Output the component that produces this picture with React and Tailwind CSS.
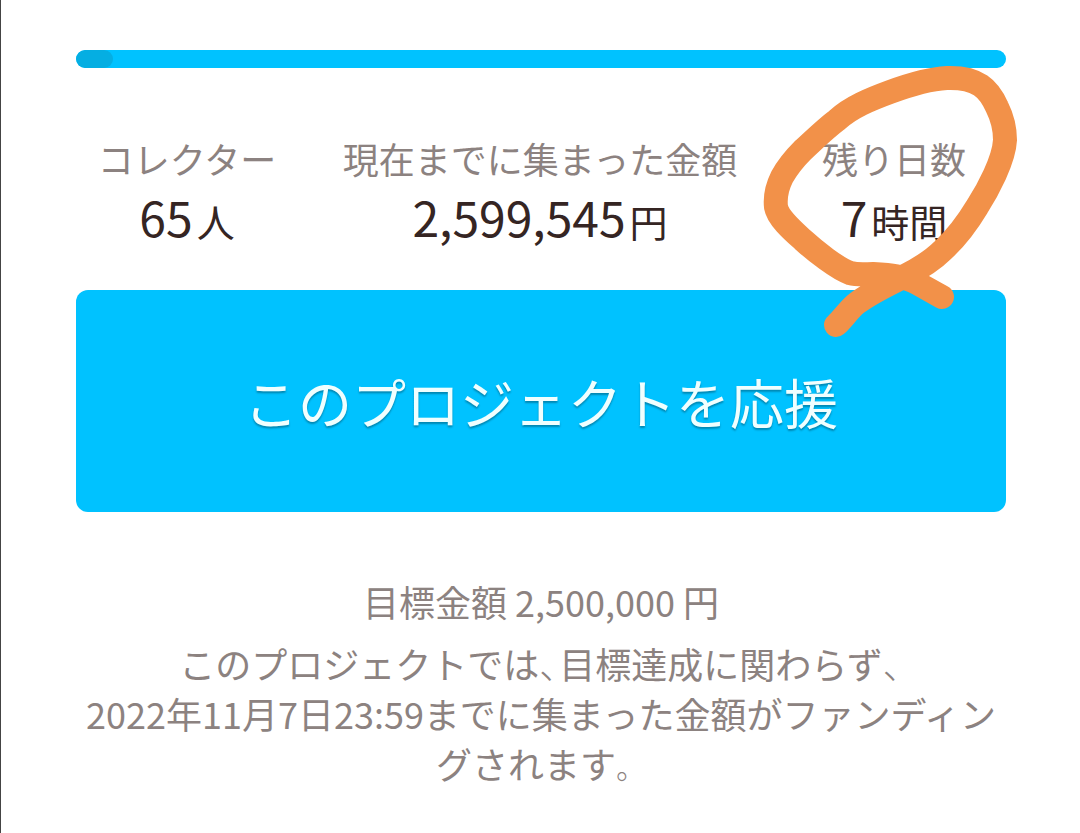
const stats = [
  { label: "コレクター", value: "65", unit: "人", width: "w-[222px]" },
  { label: "現在までに集まった金額", value: "2,599,545", unit: "円", width: "flex-1" },
  { label: "残り日数", value: "7", unit: "時間", width: "w-[224px]" },
];

function Stat({ label, value, unit, width }) {
  return (
    <div className={`${width} whitespace-nowrap text-center`}>
      <dt className="text-[36px] leading-[52px] text-[#8c8280]">{label}</dt>
      <dd className="flex h-[66px] items-baseline justify-center gap-1 leading-[64px] text-[#352523]">
        <span className="text-5xl leading-[64px]">{value}</span>
        <span className="text-[38px]">{unit}</span>
      </dd>
    </div>
  );
}

// Narrow Japanese comma
function Comma() {
  return (
    <span className="inline-block w-5 text-left font-light [font-feature-settings:'halt']">、</span>
  );
}

// Hand-drawn loop around the remaining time
function MarkerCircle() {
  return (
    <svg
      className="pointer-events-none absolute right-0 top-0"
      width="320"
      height="350"
      viewBox="760 0 320 350"
      fill="none"
      stroke="#f29149"
      strokeWidth="24"
      strokeLinecap="round"
      strokeLinejoin="round"
      aria-hidden="true"
    >
      <path d="M836 325C843 319 849 309 857 303C870 293 887 285 903 277C917 270 931 262 943 250C957 237 968 222 977 207C988 190 1004 160 1005 140C1005 128 1002 117 997 107C989 89 978 77 947 78C928 79 909 85 890 92C871 99 851 107 837 120C825 129 814 140 803 150C795 158 787 168 782 177C777 187 775 198 776 207C778 218 793 231 803 240C815 251 838 269 850 273C858 275 866 274 873 274C890 275 904 276 917 283L942 297" />
    </svg>
  );
}

export default function App() {
  return (
    <div
      lang="ja"
      className="relative min-h-screen border-l border-[#444] bg-white pl-[75px] pr-[74px] pt-[50px] font-['Noto_Sans_CJK_JP',sans-serif]"
    >
      <div
        role="progressbar"
        aria-label="達成率"
        aria-valuenow={103}
        aria-valuemin={0}
        aria-valuemax={200}
        className="h-[18px] overflow-hidden rounded-full bg-[#00c2ff]"
      >
        <div className="h-full w-[4%] rounded-full bg-[#05aee2]" />
      </div>

      <dl className="mt-16 flex">
        {stats.map((stat) => (
          <Stat key={stat.label} {...stat} />
        ))}
      </dl>

      <button
        type="button"
        className="mt-10 h-[222px] w-full rounded-xl bg-[#00c2ff] text-[54px] text-[#f0ffff] text-shadow-[0_2px_2px_rgb(0_0_0/0.3)]"
      >
        このプロジェクトを応援
      </button>

      <div className="mt-16 text-center text-[36px] leading-[50px] text-[#8c8280]">
        <p>目標金額 2,500,000 円</p>
        <p className="mt-3">
          このプロジェクトでは
          <Comma />
          目標達成に関わらず
          <Comma />
          <br />
          2022年11月7日23:59までに集まった金額がファンディングされます
          <span className="text-[30px] font-light">。</span>
        </p>
      </div>

      <MarkerCircle />
    </div>
  );
}
